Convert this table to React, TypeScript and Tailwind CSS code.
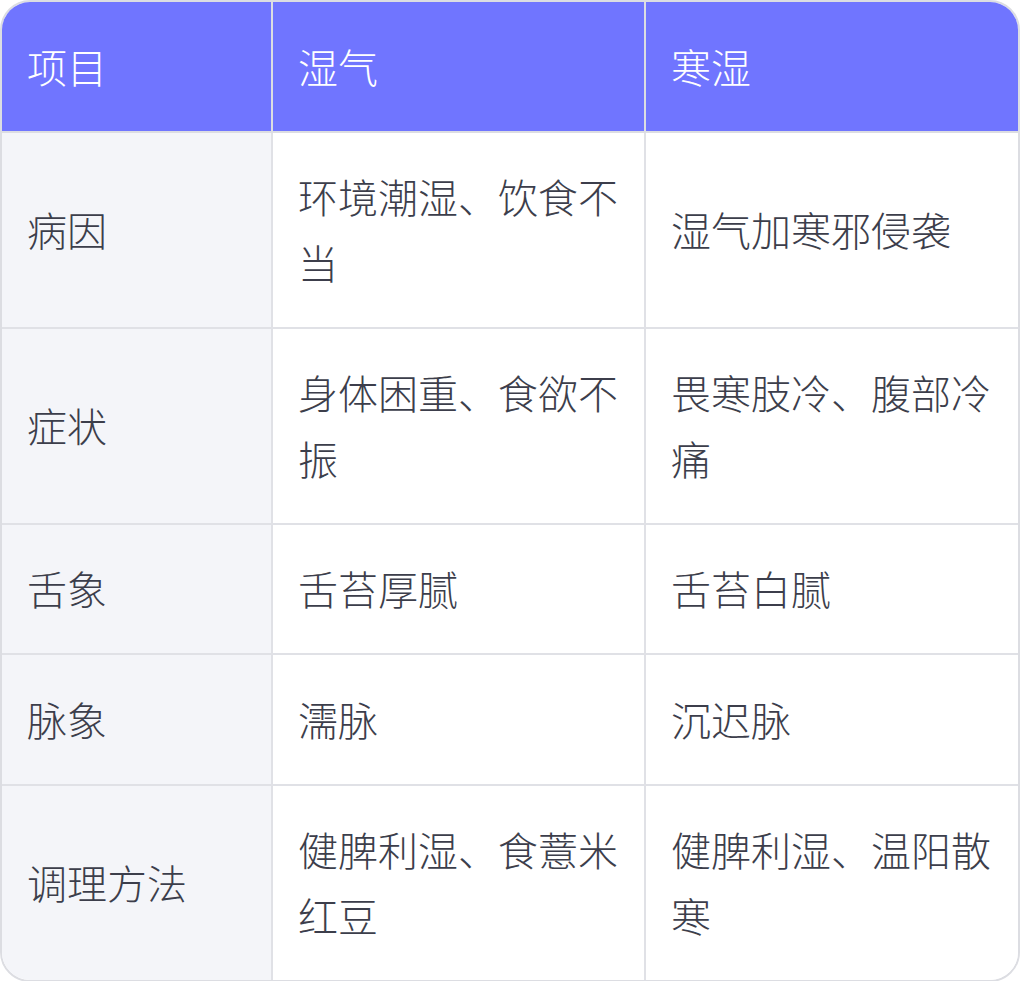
import React from "react";

const header = ["项目", "湿气", "寒湿"];
const rows: string[][] = [
  ["病因", "环境潮湿、饮食不当", "湿气加寒邪侵袭"],
  ["症状", "身体困重、食欲不振", "畏寒肢冷、腹部冷痛"],
  ["舌象", "舌苔厚腻", "舌苔白腻"],
  ["脉象", "濡脉", "沉迟脉"],
  ["调理方法", "健脾利湿、食薏米红豆", "健脾利湿、温阳散寒"],
];

export default function App() {
  return (
    <div
      className="w-[1020px] h-[981px] bg-white"
      style={{ fontFamily: '"Noto Sans CJK SC", "Noto Sans", sans-serif' }}
    >
      <div className="border-2 border-[#dcdde2] rounded-[30px] overflow-hidden">
        <div className="grid grid-cols-[271px_373px_1fr] text-[40px] leading-[65.5px] font-light">
          {header.map((h, i) => (
            <div
              key={h}
              className={`bg-[#7075ff] text-white px-[25px] py-[31.5px] flex items-center border-b-2 border-[#dcdde2] ${
                i < 2 ? "border-r-2" : ""
              }`}
            >
              {h}
            </div>
          ))}
          {rows.map((r, ri) =>
            r.map((c, ci) => (
              <div
                key={`${ri}-${ci}`}
                className={`px-[25px] py-[31.5px] flex items-center text-[#3c3e4b] border-[#e0e1e6] ${
                  ci === 0 ? "bg-[#f4f5f9]" : "bg-white"
                } ${ci < 2 ? "border-r-2" : ""} ${ri < rows.length - 1 ? "border-b-2" : ""}`}
              >
                <span>{c}</span>
              </div>
            ))
          )}
        </div>
      </div>
    </div>
  );
}
